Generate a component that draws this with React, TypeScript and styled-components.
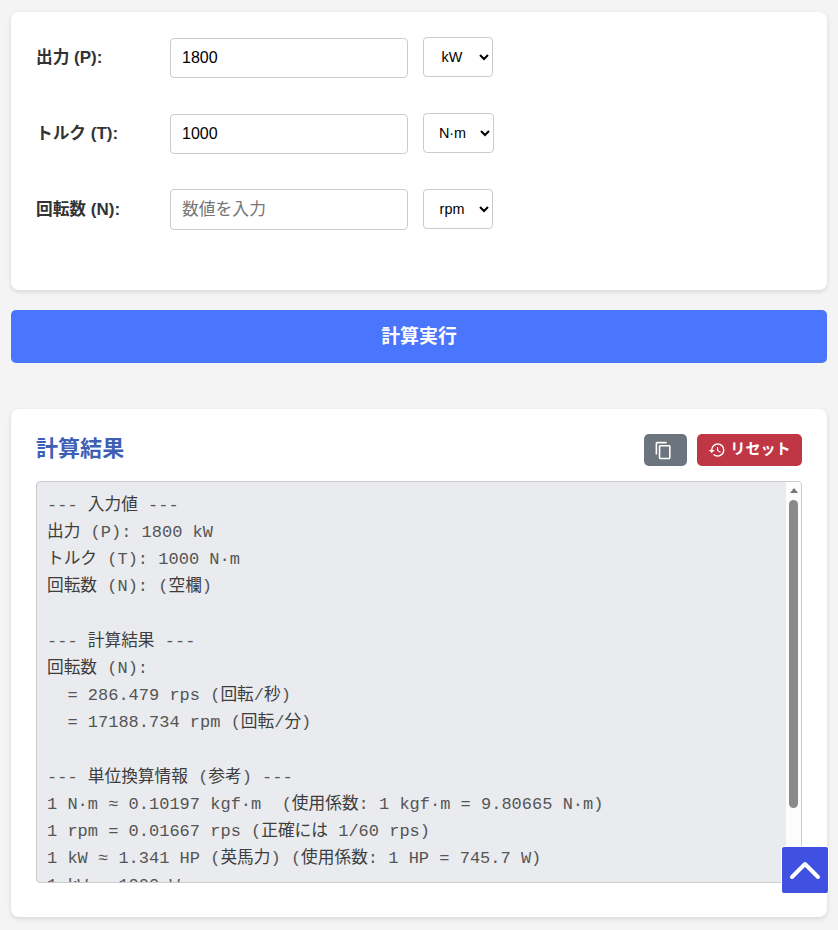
import { createGlobalStyle, styled } from "styled-components";
import { MdContentCopy, MdHistory } from "react-icons/md";

const sans = `"Liberation Sans", "Noto Sans CJK JP", sans-serif`;
const mono = `"Liberation Mono", "Noto Sans CJK JP", monospace`;

const resultText = `--- 入力値 ---
出力 (P): 1800 kW
トルク (T): 1000 N·m
回転数 (N): (空欄)

--- 計算結果 ---
回転数 (N):
  = 286.479 rps (回転/秒)
  = 17188.734 rpm (回転/分)

--- 単位換算情報 (参考) ---
1 N·m ≈ 0.10197 kgf·m  (使用係数: 1 kgf·m = 9.80665 N·m)
1 rpm = 0.01667 rps (正確には 1/60 rps)
1 kW ≈ 1.341 HP (英馬力) (使用係数: 1 HP = 745.7 W)
1 kW = 1000 W`;

const fields = [
    { label: "出力 (P):", value: "1800", units: ["kW", "W", "MW", "HP"], width: 70 },
    { label: "トルク (T):", value: "1000", units: ["N·m", "kgf·m"], width: 71 },
    { label: "回転数 (N):", value: "", units: ["rpm", "rps"], width: 70 },
];

// the japanese glyphs run a little wider than the latin ones next to them
const withJp = (text: string) =>
    text.split(/([\u3040-\u9fff]+)/).map((part, i) => (i % 2 ? <Jp key={i}>{part}</Jp> : part));

export default function App() {
    return <Page>
        <GlobalStyle />
        <Card>
            <Form>
                {fields.map((field) => (
                    <Row key={field.label}>
                        <Label>{withJp(field.label)}</Label>
                        <NumberInput defaultValue={field.value} placeholder="数値を入力" />
                        <UnitSelect $width={field.width} defaultValue={field.units[0]}>
                            {field.units.map((unit) => <option key={unit}>{unit}</option>)}
                        </UnitSelect>
                    </Row>
                ))}
            </Form>
        </Card>
        <RunButton>{withJp("計算実行")}</RunButton>
        <ResultCard>
            <ResultHeader>
                <ResultTitle>{withJp("計算結果")}</ResultTitle>
                <Actions>
                    <CopyButton aria-label="コピー"><CopyIcon size={19} /></CopyButton>
                    <ResetButton><MdHistory size={18} /><ResetText>{withJp("リセット")}</ResetText></ResetButton>
                </Actions>
            </ResultHeader>
            <OutputFrame>
                <Output>{withJp(resultText)}</Output>
                <ScrollRail>
                    <ScrollArrow />
                    <ScrollThumb />
                </ScrollRail>
            </OutputFrame>
        </ResultCard>
        <TopButton aria-label="トップへ戻る">
            <svg width="32" height="20" viewBox="0 0 32 20" fill="none" stroke="#fff" strokeWidth="4" strokeLinecap="round" strokeLinejoin="round">
                <path d="M3 17 L16 4 L29 17" />
            </svg>
        </TopButton>
    </Page>;
}

const GlobalStyle = createGlobalStyle`
    html, body {
        margin: 0;
        height: 930px;
        overflow: hidden;
        background-color: #f4f4f4;
    }

    * {
        box-sizing: border-box;
    }
`

const Jp = styled.span`
    font-size: 1.05em;
    line-height: 0;
`

const Page = styled.div`
    display: flex;
    flex-direction: column;
    padding: 12px 11px 0;
    font-family: ${sans};
    color: #333;
`

const Card = styled.div`
    height: 278px;
    padding: 25px;
    background-color: #fff;
    border-radius: 8px;
    box-shadow: 0 2px 5px rgba(0, 0, 0, 0.12);
`

const Form = styled.div`
    display: flex;
    flex-direction: column;
    row-gap: 35.4px;
    padding-top: 0.8px;
`

const Row = styled.div`
    display: flex;
    align-items: center;
    height: 40.4px;
`

const Label = styled.label`
    width: 134px;
    margin-top: 1px;
    font-size: 17px;
    font-weight: 700;

    span {
        font-size: 16.7px;
    }
`

const NumberInput = styled.input`
    width: 238px;
    height: 40.4px;
    padding: 0 11px;
    border: 1px solid #ccc;
    border-radius: 4px;
    font-family: ${sans};
    font-size: 16px;
    color: #000;

    &::placeholder {
        color: #757575;
        font-size: 16.8px;
    }
`

const UnitSelect = styled.select<{ $width: number }>`
    align-self: flex-start;
    width: ${(props) => props.$width}px;
    height: 40px;
    margin: -0.8px 0 0 15px;
    padding: 0 8px;
    border: 1px solid #ccc;
    border-radius: 4px;
    background-color: #fff;
    font-family: ${sans};
    font-size: 14.4px;
    text-align: center;
    color: #000;
`

const RunButton = styled.button`
    margin-top: 20px;
    height: 53px;
    padding: 1px 0 0;
    border: 0;
    border-radius: 5px;
    background-color: #4a76fd;
    color: #fff;
    font-family: ${sans};
    font-size: 18px;
    font-weight: 700;
`

const ResultCard = styled(Card)`
    margin-top: 46px;
    height: 508px;
`

const ResultHeader = styled.div`
    display: flex;
    justify-content: space-between;
    align-items: center;
    height: 32px;
`

const ResultTitle = styled.h2`
    margin: -2px 0 0;
    font-size: 21px;
    font-weight: 700;
    color: #3f5fb5;
`

const Actions = styled.div`
    display: flex;
    column-gap: 10px;
`

const CopyButton = styled.button`
    display: flex;
    align-items: center;
    justify-content: center;
    width: 43px;
    height: 32px;
    padding: 0;
    border: 0;
    border-radius: 5px;
    background-color: #6c757d;
    color: #fff;
`

const CopyIcon = styled(MdContentCopy)`
    margin-right: 5px;
`

const ResetButton = styled(CopyButton)`
    column-gap: 4px;
    width: 105px;
    background-color: #bf3645;
    font-family: ${sans};
    font-size: 14.4px;
    font-weight: 700;
`

const ResetText = styled.span`
    margin-top: -3px;
`

const OutputFrame = styled.div`
    display: flex;
    height: 402px;
    margin-top: 15px;
    overflow: hidden;
    border: 1px solid #ccc;
    border-radius: 4px;
    background-color: #e9ebef;
`

const Output = styled.pre`
    flex: 1;
    margin: 0;
    padding: 9.5px 10px;
    overflow: hidden;
    font-family: ${mono};
    font-size: 17px;
    line-height: 27.2px;
    color: #555;

    span {
        font-size: 16.7px;
        color: #3d3d3d;
    }
`

const ScrollRail = styled.div`
    display: flex;
    flex-direction: column;
    align-items: center;
    width: 15px;
    background-color: #fcfcfc;
`

const ScrollArrow = styled.div`
    width: 0;
    height: 0;
    margin-top: 6px;
    border-left: 4px solid transparent;
    border-right: 4px solid transparent;
    border-bottom: 5px solid #777;
`

const ScrollThumb = styled.div`
    width: 9px;
    height: 308px;
    margin-top: 7px;
    border-radius: 5px;
    background-color: #8a8a8a;
`

const TopButton = styled.button`
    position: fixed;
    left: 781px;
    top: 846px;
    display: flex;
    align-items: center;
    justify-content: center;
    width: 48px;
    height: 48px;
    padding: 0;
    border: 1px solid #fff;
    border-radius: 3px;
    background-color: #4050e0;
`
